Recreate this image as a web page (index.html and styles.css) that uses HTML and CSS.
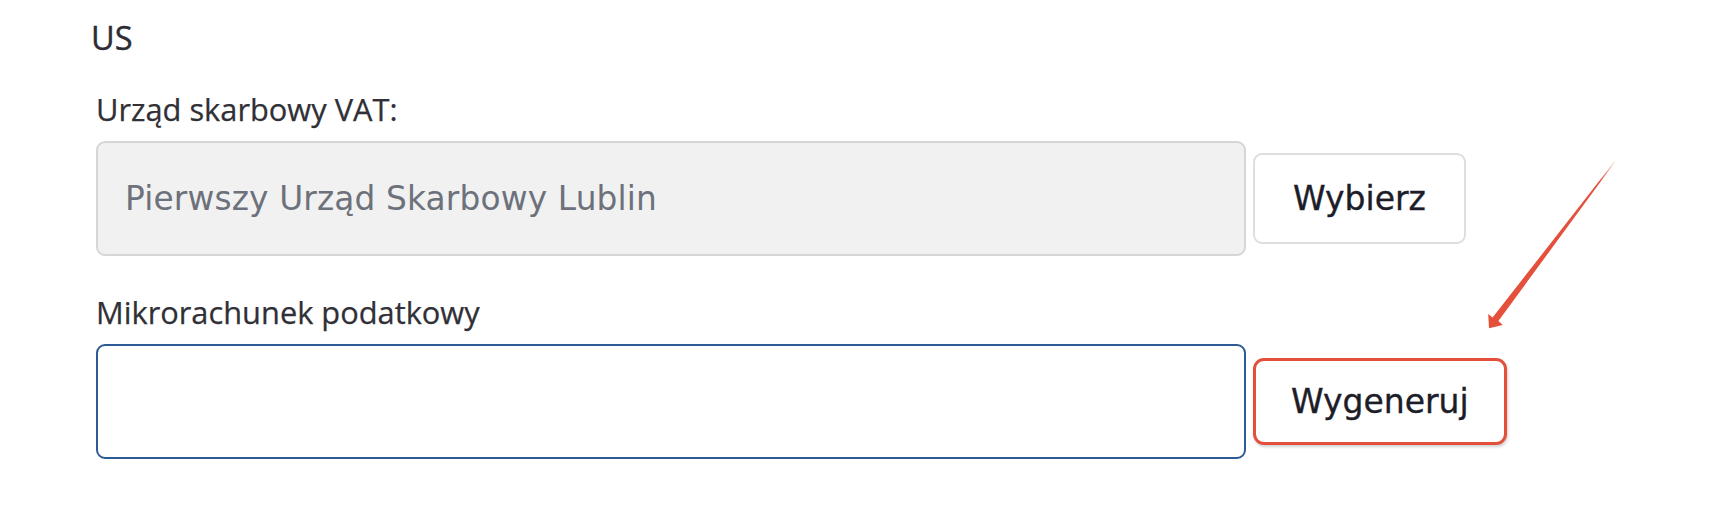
FILE: index.html
```html
<!DOCTYPE html>
<html lang="pl">
<head>
<meta charset="utf-8">
<title>US</title>
<link rel="stylesheet" href="styles.css">
</head>
<body>
<main class="page">
  <h2 class="section-title">US</h2>

  <div class="field field-first">
    <label class="field-label" for="us-vat">Urząd skarbowy VAT:</label>
    <div class="field-row">
      <input id="us-vat" class="text-input text-input-disabled" type="text" value="Pierwszy Urząd Skarbowy Lublin" readonly>
      <button class="btn" type="button">Wybierz</button>
    </div>
  </div>

  <div class="field field-second">
    <label class="field-label" for="mikro">Mikrorachunek podatkowy</label>
    <div class="field-row">
      <input id="mikro" class="text-input text-input-focus" type="text">
      <button class="btn btn-highlight" type="button">Wygeneruj</button>
    </div>
  </div>

  <svg class="annotation" width="1724" height="509" viewBox="0 0 1724 509" aria-hidden="true">
    <defs>
      <linearGradient id="fade" x1="1615" y1="162" x2="1489" y2="328" gradientUnits="userSpaceOnUse">
        <stop offset="0" stop-color="#e4503b" stop-opacity="0.2"/>
        <stop offset="0.12" stop-color="#e4503b" stop-opacity="1"/>
        <stop offset="1" stop-color="#e4503b" stop-opacity="1"/>
      </linearGradient>
    </defs>
    <path d="M1615.4,161.6 L1498.4,321.0 L1502.8,325.0 L1489,328.2 L1488.2,314.0 L1492.6,317.6 L1614.6,161.2 Z" fill="url(#fade)"/>
  </svg>
</main>
</body>
</html>
```

FILE: styles.css
```css
html, body {
  margin: 0;
  padding: 0;
  background: #ffffff;
}

.page {
  position: relative;
  width: 1724px;
  height: 509px;
  box-sizing: border-box;
  padding: 20px 0 0 91px;
  font-family: "Open Sans", "Liberation Sans", Arial, sans-serif;
  color: #353535;
}

.section-title {
  margin: 0;
  font-size: 32.5px;
  line-height: 36px;
  font-weight: normal;
  color: #2c2c34;
  -webkit-text-stroke: 0.4px #2c2c34;
}

.field {
  display: flex;
  flex-direction: column;
  align-items: flex-start;
}

.field-first {
  margin-top: 34px;
  padding-left: 5px;
}

.field-second {
  margin-top: 37px;
  padding-left: 5px;
}

.field-label {
  font-size: 30.8px;
  line-height: 38px;
  color: #303036;
  -webkit-text-stroke: 0.25px #303036;
  margin-bottom: 13px;
}

.field-row {
  display: flex;
  align-items: center;
  gap: 7px;
}

.text-input {
  box-sizing: border-box;
  width: 1150px;
  height: 115px;
  padding: 0 0 0 27px;
  border: 2px solid #d9d9d9;
  border-radius: 9px;
  background: #ffffff;
  font-family: "DejaVu Sans", Verdana, sans-serif;
  font-size: 32.8px;
  letter-spacing: 0.15px;
  color: #6d717b;
  outline: none;
}

.text-input-disabled {
  background: #f1f1f1;
  border-color: #d6d6d6;
}

.text-input-focus {
  border-color: #2d5b96;
}

.btn {
  box-sizing: border-box;
  height: 91px;
  padding: 0 38px;
  border: 2px solid #dedede;
  border-radius: 9px;
  background: #ffffff;
  font-family: "DejaVu Sans", Verdana, sans-serif;
  font-size: 33px;
  color: #1d1d2a;
  -webkit-text-stroke: 0.35px #1d1d2a;
  cursor: pointer;
}

.btn-highlight {
  height: 87px;
  padding: 0 35px;
  border: 3px solid #e2503b;
  border-radius: 11px;
  box-shadow: 1px 2px 3px rgba(0, 0, 0, 0.18);
}

.annotation {
  position: absolute;
  left: 0;
  top: 0;
  pointer-events: none;
}
```
